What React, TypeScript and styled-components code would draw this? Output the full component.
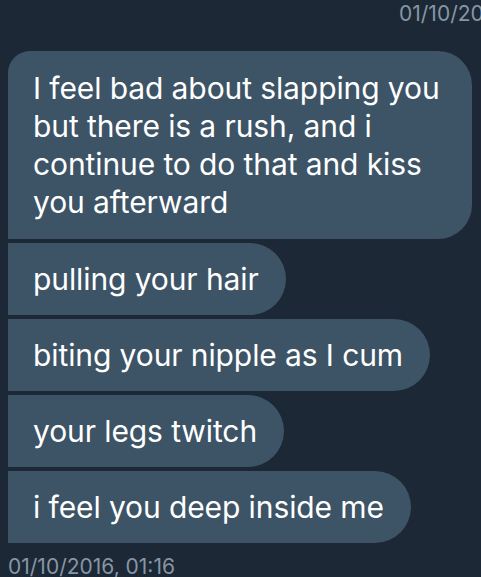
import { createGlobalStyle, styled } from 'styled-components';

const messages = [
  'I feel bad about slapping you but there is a rush, and i continue to do that and kiss you afterward',
  'pulling your hair',
  'biting your nipple as I cum',
  'your legs twitch',
  'i feel you deep inside me',
];

const App = () => {
  return (
    <>
      <GlobalStyle />
      <Screen>
        <TopStamp>01/10/2016, 01:16</TopStamp>
        <Thread>
          {messages.map((text, i) => (
            <Bubble key={i} $first={i === 0}>
              {text}
            </Bubble>
          ))}
        </Thread>
        <BottomStamp>01/10/2016, 01:16</BottomStamp>
      </Screen>
    </>
  );
};

const GlobalStyle = createGlobalStyle`
  html, body {
    margin: 0;
    padding: 0;
    background-color: #1c2835;
    overflow: hidden;
  }
  body {
    font-family: Inter, "Open Sans", sans-serif;
  }
`;
const Screen = styled.div`
  width: 481px;
  height: 577px;
  overflow: hidden;
  background-color: #1c2835;
`;
const TopStamp = styled.div`
  padding: 1px 0 0 399px;
  height: 51px;
  box-sizing: border-box;
  white-space: nowrap;
  font-size: 21px;
  color: #8796a4;
`;
const Thread = styled.div`
  display: flex;
  flex-direction: column;
  align-items: flex-start;
  gap: 4px;
  padding-left: 8px;
`;
const Bubble = styled.div<{ $first: boolean }>`
  max-width: 464px;
  box-sizing: border-box;
  padding: ${({ $first }) => ($first ? '18px 27px 18px 25px' : '17px 27px 17px 25px')};
  background-color: #3d5366;
  color: #ffffff;
  font-size: 30px;
  line-height: 38px;
  letter-spacing: -0.1px;
  border-radius: ${({ $first }) => ($first ? '22px 34px 34px 0' : '0 36px 36px 0')};
`;
const BottomStamp = styled.div`
  padding: 11px 0 0 8px;
  white-space: nowrap;
  font-size: 21px;
  color: #8796a4;
`;

export default App;
